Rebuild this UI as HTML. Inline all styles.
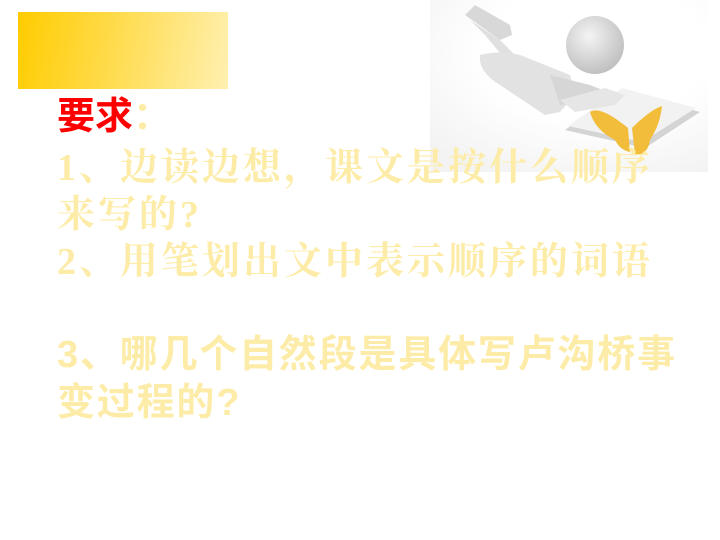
<!DOCTYPE html>
<html><head><meta charset="utf-8"><style>
body{margin:0;width:720px;height:540px;background:#fff;position:relative;overflow:hidden}
.box{position:absolute;left:18px;top:12px;width:210px;height:77px;background:linear-gradient(100deg,#ffcc00 0%,#ffdd55 50%,#fff0b0 100%)}
.t{position:absolute;left:57px;white-space:nowrap;color:#fdeca8;font-size:38px;line-height:47px}
.s{font-family:"Liberation Serif","Noto Serif CJK SC",serif;font-weight:bold;letter-spacing:3px}
.b{font-family:"Liberation Sans","Noto Sans CJK SC",sans-serif;font-weight:bold;letter-spacing:1.8px}
</style></head><body>
<div class="box"></div>
<svg style="position:absolute;left:426px;top:0" width="294" height="172" viewBox="426 0 294 172">
<defs><radialGradient id="bg" cx="0.6" cy="0.3" r="0.8"><stop offset="0.5" stop-color="#fff"/><stop offset="1" stop-color="#f3f3f3"/></radialGradient>
<radialGradient id="hd" cx="0.4" cy="0.35" r="0.7"><stop offset="0" stop-color="#f4f4f4"/><stop offset="1" stop-color="#bdbdbd"/></radialGradient></defs>
<rect x="430" y="0" width="278" height="172" fill="url(#bg)"/>
<path d="M465 15 L475 5 L510 25 L512 35 L500 40 Z" fill="#d8d8d8"/>
<path d="M470 20 L500 40 L520 60 L510 65 L485 35 Z" fill="#e0e0e0"/>
<path d="M480 55 Q500 50 520 55 L570 75 L575 95 L560 112 L545 115 L500 85 Q478 72 480 55 Z" fill="#e2e2e2"/>
<path d="M550 75 L590 85 L615 95 L618 100 L600 100 L560 105 Z" fill="#d6d6d6"/>
<circle cx="595" cy="45" r="29" fill="url(#hd)"/>
<path d="M565 130 L620 90 L700 112 L645 148 Z" fill="#d4d4d4"/>
<path d="M568 126 L622 88 L696 108 L642 142 Z" fill="#f2f2f2"/>
<path d="M560 100 L605 88 L625 95 L615 105 L575 112 Z" fill="#e6e6e6"/>
<path d="M628 128 Q600 105 590 112 Q595 130 615 140 Q620 150 630 152 Z" fill="#f2bd3a"/>
<path d="M632 128 Q650 110 662 106 Q660 125 650 140 Q648 155 635 155 Z" fill="#f2bd3a"/>
</svg>
<div class="t b" style="top:94px;color:#f00;letter-spacing:0">要求<span style="color:#fdeca8">：</span></div>
<div class="t s" style="top:145px">1、边读边想，课文是按什么顺序</div>
<div class="t s" style="top:192px">来写的?</div>
<div class="t s" style="top:239px">2、用笔划出文中表示顺序的词语</div>
<div class="t b" style="top:332px">3、哪几个自然段是具体写卢沟桥事</div>
<div class="t b" style="top:380px">变过程的?</div>
</body></html>
